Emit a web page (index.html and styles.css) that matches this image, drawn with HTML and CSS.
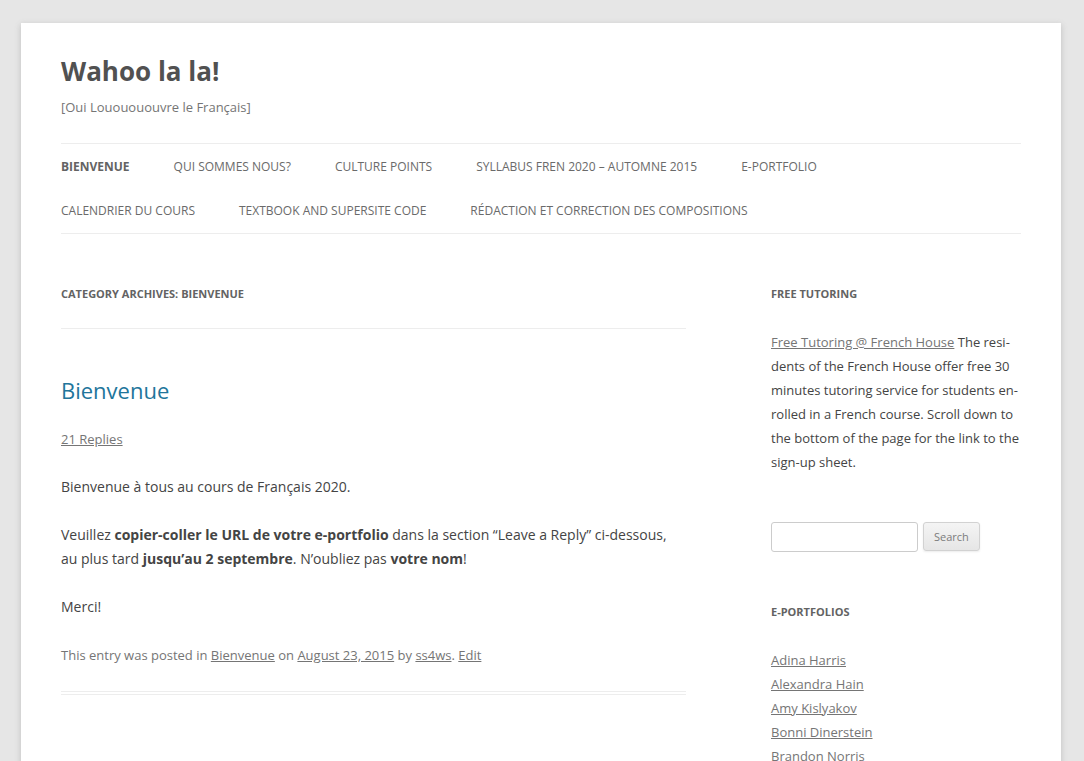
FILE: index.html
```html
<!DOCTYPE html>
<html lang="en">
<head>
<meta charset="utf-8">
<title>Bienvenue | Wahoo la la!</title>
<link rel="stylesheet" href="styles.css">
</head>
<body>
<div class="site">
  <header class="site-header">
    <h1 class="site-title"><a href="#">Wahoo la la!</a></h1>
    <h2 class="site-description">[Oui Lououououvre le Français]</h2>
    <nav class="main-navigation">
      <ul class="nav-menu">
        <li class="current"><a href="#">Bienvenue</a></li>
        <li><a href="#">Qui sommes nous?</a></li>
        <li><a href="#">Culture Points</a></li>
        <li><a href="#">Syllabus FREN 2020 – Automne 2015</a></li>
        <li><a href="#">E-Portfolio</a></li>
        <li><a href="#">Calendrier du cours</a></li>
        <li><a href="#">Textbook and Supersite Code</a></li>
        <li><a href="#">Rédaction et correction des compositions</a></li>
      </ul>
    </nav>
  </header>
  <div class="main">
    <section class="site-content">
      <header class="archive-header">
        <h1 class="archive-title">Category Archives: <span>Bienvenue</span></h1>
      </header>
      <article class="post">
        <header class="entry-header">
          <h1 class="entry-title"><a href="#">Bienvenue</a></h1>
          <div class="comments-link"><a href="#">21 Replies</a></div>
        </header>
        <div class="entry-content">
          <p>Bienvenue à tous au cours de Français 2020.</p>
          <p>Veuillez <strong>copier-coller le URL de votre e-portfolio</strong> dans la section “Leave a Reply” ci-dessous, au plus tard <strong>jusqu’au 2 septembre</strong>. N’oubliez pas <strong>votre nom</strong>!</p>
          <p>Merci!</p>
        </div>
        <footer class="entry-meta">This entry was posted in <a href="#">Bienvenue</a> on <a href="#">August 23, 2015</a> by <a href="#">ss4ws</a>. <a href="#">Edit</a></footer>
      </article>
    </section>
    <aside class="widget-area">
      <div class="widget">
        <h3 class="widget-title">Free Tutoring</h3>
        <div class="textwidget"><a href="#">Free Tutoring @ French House</a> The resi&shy;dents of the French House offer free 30 minutes tutoring service for students en&shy;rolled in a French course. Scroll down to the bottom of the page for the link to the sign-up sheet.</div>
      </div>
      <div class="widget">
        <form class="searchform">
          <input type="text" class="search-input">
          <button type="button" class="search-btn">Search</button>
        </form>
      </div>
      <div class="widget">
        <h3 class="widget-title">E-Portfolios</h3>
        <ul class="links">
          <li><a href="#">Adina Harris</a></li>
          <li><a href="#">Alexandra Hain</a></li>
          <li><a href="#">Amy Kislyakov</a></li>
          <li><a href="#">Bonni Dinerstein</a></li>
          <li><a href="#">Brandon Norris</a></li>
          <li><a href="#">Caroline Smith</a></li>
        </ul>
      </div>
    </aside>
  </div>
</div>
</body>
</html>
```

FILE: styles.css
```css
html {
  background: #e6e6e6;
}
body {
  margin: 0;
  padding-right: 2px;
  font-family: "Open Sans", "Liberation Sans", sans-serif;
  font-size: 14px;
  line-height: 24px;
  color: #444;
  text-rendering: optimizeLegibility;
}
a {
  color: #21759b;
}
h1, h2, h3, p, ul {
  margin: 0;
  padding: 0;
}
.site {
  max-width: 960px;
  margin: 23px auto 48px;
  padding: 0 40px;
  background: #fff;
  box-shadow: 0 2px 6px rgba(100, 100, 100, 0.3);
}
.site-header {
  padding: 24px 0;
}
.site-title {
  font-size: 26px;
  line-height: 48px;
  font-weight: bold;
}
.site-title a {
  color: #515151;
  text-decoration: none;
}
.site-description {
  font-size: 13px;
  line-height: 24px;
  font-weight: normal;
  color: #757575;
}
.main-navigation {
  margin-top: 24px;
}
.nav-menu {
  list-style: none;
  border-top: 1px solid #ededed;
  border-bottom: 1px solid #ededed;
  display: flex;
  flex-wrap: wrap;
  column-gap: 4px;
}
.nav-menu li {
  margin-right: 40px;
  font-size: 12px;
  line-height: 44.3px;
  padding-top: 1px;
  height: 43.3px;
}
.nav-menu a {
  color: #6a6a6a;
  text-decoration: none;
  text-transform: uppercase;
  white-space: nowrap;
}
.nav-menu .current a {
  color: #636363;
  font-weight: bold;
}
.main {
  display: flex;
  justify-content: space-between;
  align-items: flex-start;
}
.site-content {
  width: 625px;
  margin-top: 24px;
}
.archive-header {
  padding-bottom: 22px;
  border-bottom: 1px solid #ededed;
  margin-bottom: 48px;
}
.archive-title, .widget-title {
  font-size: 11px;
  line-height: 24px;
  font-weight: bold;
  text-transform: uppercase;
  color: #636363;
}
.post {
  border-bottom: 4px double #ededed;
  padding-bottom: 24px;
  margin-bottom: 72px;
}
.entry-header {
  margin-bottom: 24px;
}
.entry-title {
  font-size: 22px;
  line-height: 26px;
  font-weight: normal;
}
.entry-title a {
  color: #21759b;
  text-decoration: none;
}
.comments-link {
  margin-top: 24px;
  font-size: 13px;
  line-height: 24px;
}
.comments-link a, .entry-meta a {
  color: #757575;
}
.entry-content p {
  margin-bottom: 24px;
}
.entry-content strong {
  font-weight: bold;
}
.entry-meta {
  font-size: 13px;
  line-height: 24px;
  color: #757575;
}
.widget-area {
  width: 250px;
  margin-top: 24px;
}
.widget {
  margin-bottom: 48px;
}
.widget-title {
  margin-bottom: 24px;
}
.textwidget {
  font-size: 13px;
  line-height: 24px;
}
.textwidget a, .links a {
  color: #757575;
}
.links {
  list-style: none;
}
.links li {
  font-size: 13px;
  line-height: 24px;
}
.searchform {
  display: flex;
  align-items: center;
  gap: 5px;
}
.search-input {
  box-sizing: border-box;
  width: 147px;
  height: 30px;
  padding: 6px;
  border: 1px solid #ccc;
  border-radius: 3px;
  font-family: inherit;
  font-size: 12px;
  color: #444;
  background: #fff;
  margin: 0;
}
.search-btn {
  box-sizing: border-box;
  height: 29px;
  padding: 6px 10px;
  font-family: inherit;
  font-size: 11px;
  line-height: 15px;
  color: #7c7c7c;
  background: linear-gradient(to bottom, #f4f4f4, #e6e6e6);
  border: 1px solid #d2d2d2;
  border-radius: 3px;
  box-shadow: 0 1px 2px rgba(64, 64, 64, 0.1);
  margin: 0;
}
```
